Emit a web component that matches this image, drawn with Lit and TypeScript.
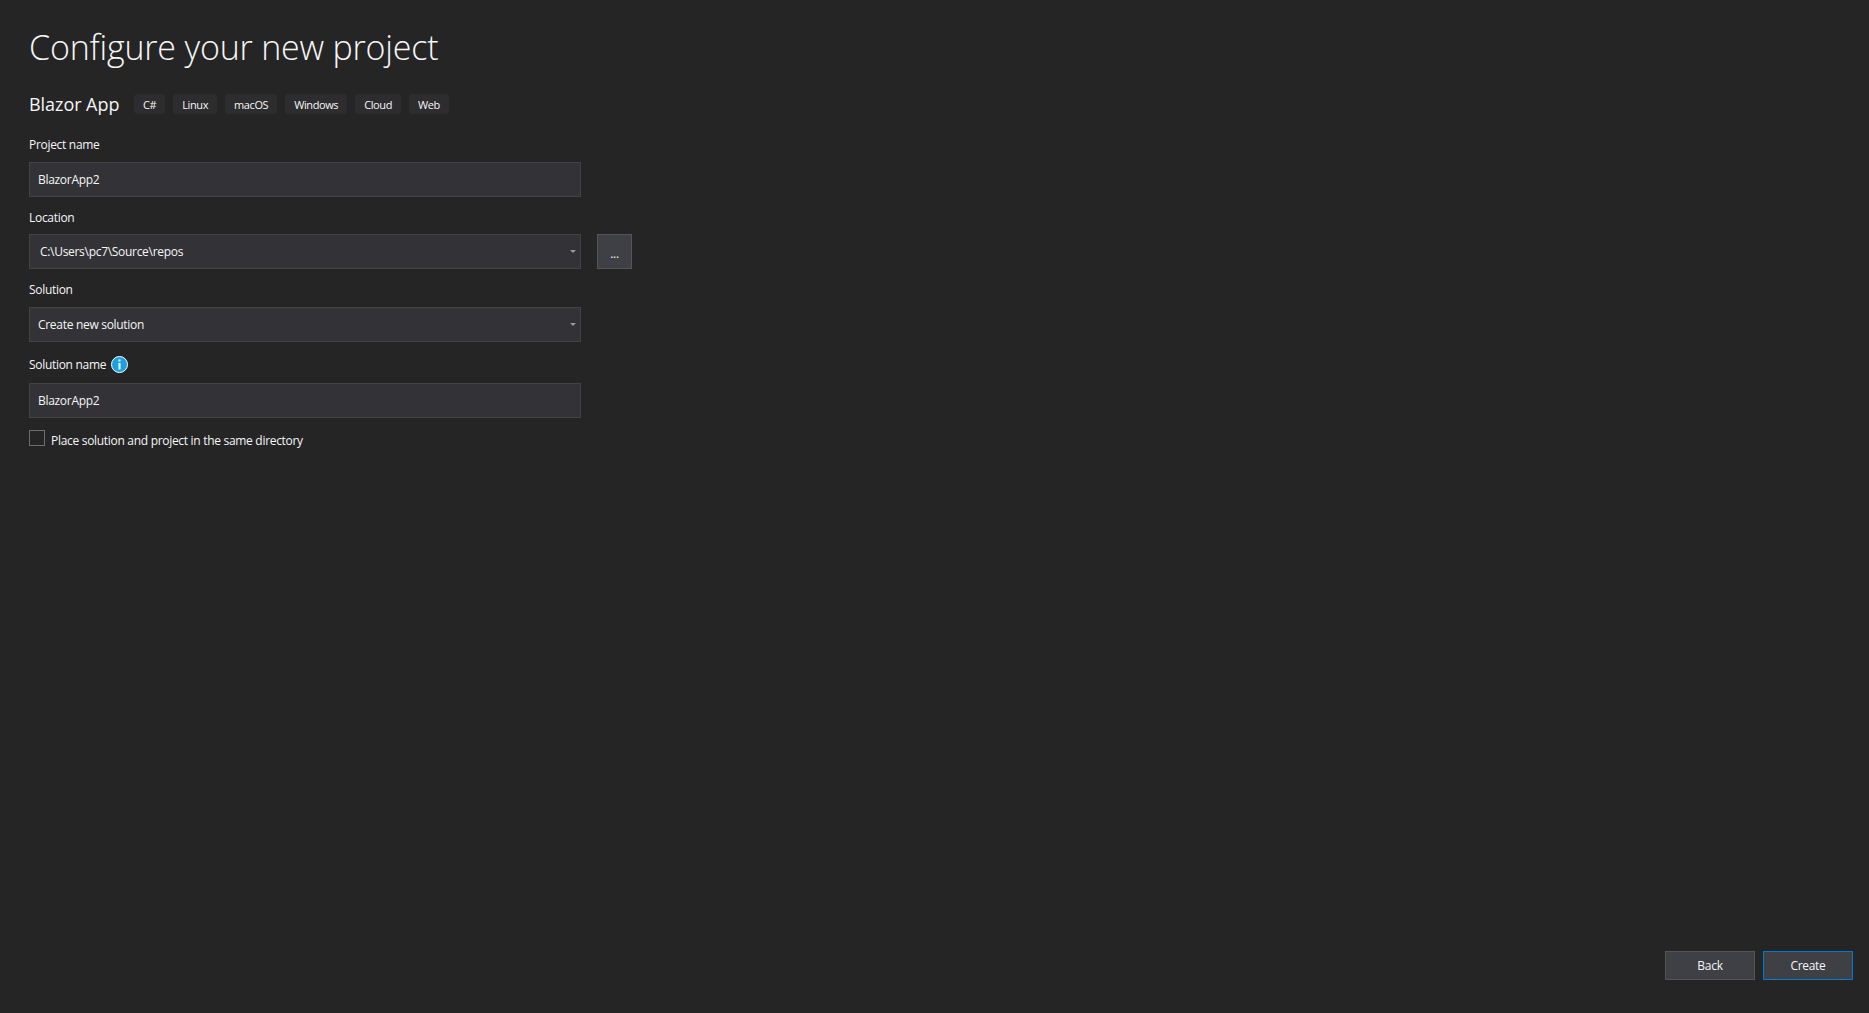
import { LitElement, html, css } from 'lit';
import { customElement } from 'lit/decorators.js';

const TAGS = ['C#', 'Linux', 'macOS', 'Windows', 'Cloud', 'Web'];

@customElement('app-root')
export class AppRoot extends LitElement {
  static styles = css`
    :host {
      display: flex;
      flex-direction: column;
      justify-content: space-between;
      box-sizing: border-box;
      height: 1013px;
      padding: 24px 16px 33px 29px;
      background: #252526;
      color: #f6f6f6;
      font-family: 'Open Sans', 'Noto Sans', sans-serif;
      font-size: 12px;
      letter-spacing: -0.3px;
      overflow: hidden;
    }

    h1 {
      margin: 0;
      font-size: 34px;
      line-height: 46px;
      font-weight: 300;
      letter-spacing: -0.2px;
    }

    .subtitle {
      display: flex;
      align-items: center;
      gap: 8px;
      height: 20px;
      margin-top: 24px;
    }

    .subtitle .name {
      width: 97px;
      font-size: 18px;
      letter-spacing: -0.05px;
    }

    .tag {
      display: flex;
      align-items: center;
      justify-content: center;
      height: 20px;
      padding: 0 9px;
      border-radius: 4px;
      background: #2d2d30;
      font-size: 11px;
      letter-spacing: -0.4px;
    }

    .label {
      display: flex;
      align-items: center;
      gap: 5px;
      height: 20px;
    }

    .box {
      display: flex;
      align-items: center;
      box-sizing: border-box;
      width: 552px;
      height: 35px;
      padding: 0 4px 0 8px;
      border: 1px solid #434346;
      background: #333337;
    }

    .box span {
      flex: 1;
    }

    .box span.path {
      margin-left: 2px;
    }

    .row {
      display: flex;
      gap: 16px;
    }

    .browse {
      display: flex;
      align-items: center;
      justify-content: center;
      box-sizing: border-box;
      width: 35px;
      height: 35px;
      padding-top: 4px;
      border: 1px solid #555558;
      background: #3f3f46;
      line-height: 1;
    }

    .arrow {
      flex: none;
      width: 0;
      height: 0;
      border: 3px solid transparent;
      border-top: 3px solid #999999;
      border-bottom: 0;
    }

    .info {
      display: block;
      width: 17px;
      height: 17px;
    }

    .check {
      display: flex;
      align-items: flex-start;
      gap: 6px;
      height: 16px;
      margin-top: 12px;
    }

    .check i {
      flex: none;
      box-sizing: border-box;
      width: 16px;
      height: 16px;
      border: 1px solid #6e6e70;
    }

    .check span {
      padding-top: 3px;
      line-height: 16px;
    }

    footer {
      display: flex;
      justify-content: flex-end;
      gap: 8px;
    }

    button {
      box-sizing: border-box;
      width: 90px;
      height: 29px;
      padding: 0;
      border: 1px solid #555558;
      background: #3f3f46;
      color: #f6f6f6;
      font: inherit;
      letter-spacing: inherit;
    }

    button.primary {
      border-color: #007acc;
    }

    .m7 { margin-top: 7px; }
    .m8 { margin-top: 8px; }
    .m9 { margin-top: 9px; }
    .m10 { margin-top: 10px; }
    .m12 { margin-top: 12px; }
    .m20 { margin-top: 20px; }
  `;

  render() {
    return html`
      <main>
        <h1>Configure your new project</h1>
        <div class="subtitle">
          <span class="name">Blazor App</span>
          ${TAGS.map((t) => html`<span class="tag">${t}</span>`)}
        </div>

        <div class="label m20">Project name</div>
        <div class="box m8"><span>BlazorApp2</span></div>

        <div class="label m10">Location</div>
        <div class="row m7">
          <div class="box"><span class="path">C:\\Users\\pc7\\Source\\repos</span><i class="arrow"></i></div>
          <div class="browse">...</div>
        </div>

        <div class="label m10">Solution</div>
        <div class="box m8"><span>Create new solution</span><i class="arrow"></i></div>

        <div class="label m12">
          Solution name
          <svg class="info" viewBox="0 0 17 17">
            <circle cx="8.5" cy="8.5" r="8" fill="#1ba1e2" stroke="#ffffff" stroke-width="1" />
            <rect x="7.5" y="7" width="2" height="6.5" fill="#ffffff" />
            <rect x="7.5" y="3.5" width="2" height="2" fill="#ffffff" />
          </svg>
        </div>
        <div class="box m9"><span>BlazorApp2</span></div>

        <div class="check">
          <i></i>
          <span>Place solution and project in the same directory</span>
        </div>
      </main>
      <footer>
        <button>Back</button>
        <button class="primary">Create</button>
      </footer>
    `;
  }
}
